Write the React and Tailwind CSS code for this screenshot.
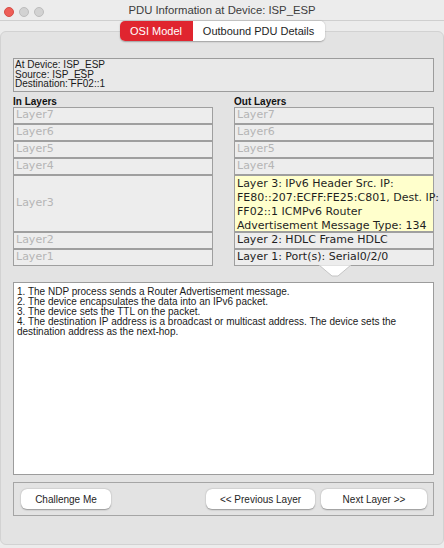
import React from 'react';

const inLayers = ['Layer7', 'Layer6', 'Layer5', 'Layer4'];

const LayerBox = ({ children, tall, dim = true, yellow }) => (
  <div
    className={
      'border border-[#9f9f9f] px-[2px] flex ' +
      (tall ? 'h-[57px] items-center ' : 'h-[17px] items-center ') +
      (yellow ? 'bg-[#ffffcc] ' : 'bg-[#ededed] ') +
      (dim ? 'text-[#b5b5b5]' : 'text-[#1f1f1f]')
    }
  >
    {children}
  </div>
);

const Button = ({ children, className = '' }) => (
  <button
    className={
      'h-[20px] bg-white rounded-[6px] text-[10px] text-[#1e1e1e] shadow-[0_0.5px_1.5px_rgba(0,0,0,0.35)] ' +
      className
    }
  >
    {children}
  </button>
);

export default function App() {
  return (
    <div className="w-[444px] h-[548px] bg-[#ececec] overflow-hidden font-['Liberation_Sans',Arial,sans-serif]">
      {/* title bar */}
      <div className="relative h-[21px] border-b border-[#cfcfcf] flex items-center justify-center">
        <div className="absolute left-[4px] top-[7px] flex gap-[5px]">
          <span className="w-[10px] h-[10px] rounded-full bg-[#ee5e57] border border-[#d64d46]" />
          <span className="w-[10px] h-[10px] rounded-full bg-[#d2d2d2] border border-[#bdbdbd]" />
          <span className="w-[10px] h-[10px] rounded-full bg-[#d2d2d2] border border-[#bdbdbd]" />
        </div>
        <span className="text-[11.3px] text-[#3c3c3c] mt-[1px]">PDU Information at Device: ISP_ESP</span>
      </div>

      {/* tabs */}
      <div className="relative z-10 flex justify-center h-[20px]">
        <div className="flex rounded-[5px] overflow-hidden shadow-[0_0.5px_1.5px_rgba(0,0,0,0.3)] text-[11px]">
          <div className="w-[73px] bg-[#e0252f] text-white flex items-center justify-center">OSI Model</div>
          <div className="w-[132px] bg-white text-[#1e1e1e] flex items-center justify-center">Outbound PDU Details</div>
        </div>
      </div>

      {/* panel */}
      <div className="-mt-[10px] h-[514px] border border-[#d2d2d2] rounded-[6px] bg-[#e3e3e3] pl-[12px] pr-[9px] pt-[26px]">
        <div className="h-[34px] border border-[#9c9c9c] bg-[#e9e9e9] px-[1px] pt-[1px] text-[10px] leading-[9.6px] text-[#1a1a1a]">
          <div>At Device: ISP_ESP</div>
          <div>Source: ISP_ESP</div>
          <div>Destination: FF02::1</div>
        </div>

        <div className="grid grid-cols-[200px_200px] gap-x-[21px]">
          {/* in layers */}
          <div>
            <div className="h-[15px] flex items-end text-[10px] leading-[11px] font-bold text-[#111]">In Layers</div>
            <div className="flex flex-col font-['DejaVu_Sans',sans-serif] text-[11px]">
              {inLayers.map((l) => (
                <LayerBox key={l}>{l}</LayerBox>
              ))}
              <LayerBox tall>Layer3</LayerBox>
              <LayerBox>Layer2</LayerBox>
              <LayerBox>Layer1</LayerBox>
            </div>
          </div>

          {/* out layers */}
          <div className="relative">
            <div className="h-[15px] flex items-end text-[10px] leading-[11px] font-bold text-[#111]">Out Layers</div>
            <div className="flex flex-col font-['DejaVu_Sans',sans-serif] text-[11px]">
              {inLayers.map((l) => (
                <LayerBox key={l}>{l}</LayerBox>
              ))}
              <div className="h-[57px] border border-[#9f9f9f] bg-[#ffffcc] px-[2px] pt-[1px] text-[#1f1f1f] leading-[14px] whitespace-nowrap">
                <div>Layer 3: IPv6 Header Src. IP:</div>
                <div>FE80::207:ECFF:FE25:C801, Dest. IP:</div>
                <div>FF02::1 ICMPv6 Router</div>
                <div>Advertisement Message Type: 134</div>
              </div>
              <LayerBox dim={false}>Layer 2: HDLC Frame HDLC</LayerBox>
              <LayerBox dim={false}>Layer 1: Port(s): Serial0/2/0</LayerBox>
            </div>
            <svg className="absolute left-[84px] top-[173px]" width="34" height="12" viewBox="0 0 34 12">
              <polygon points="1,0 33,0 20,11 14,11" fill="#ffffff" stroke="#c4c4c4" strokeWidth="1" />
            </svg>
          </div>
        </div>

        {/* description */}
        <div className="mt-[16px] h-[193px] border border-[#9c9c9c] bg-white pl-[3px] pt-[4px] text-[10px] leading-[10px] text-[#1a1a1a]">
          <div>1. The NDP process sends a Router Advertisement message.</div>
          <div>2. The device encapsulates the data into an IPv6 packet.</div>
          <div>3. The device sets the TTL on the packet.</div>
          <div>4. The destination IP address is a broadcast or multicast address. The device sets the destination address as the next-hop.</div>
        </div>

        {/* buttons */}
        <div className="mt-[7px] h-[34px] border border-[#a5a5a5] flex items-center pl-[7px] pr-[6px]">
          <Button className="w-[90px]">Challenge Me</Button>
          <div className="flex-1" />
          <Button className="w-[109px]">&lt;&lt; Previous Layer</Button>
          <Button className="w-[106px] ml-[6px]">Next Layer &gt;&gt;</Button>
        </div>
      </div>
    </div>
  );
}
